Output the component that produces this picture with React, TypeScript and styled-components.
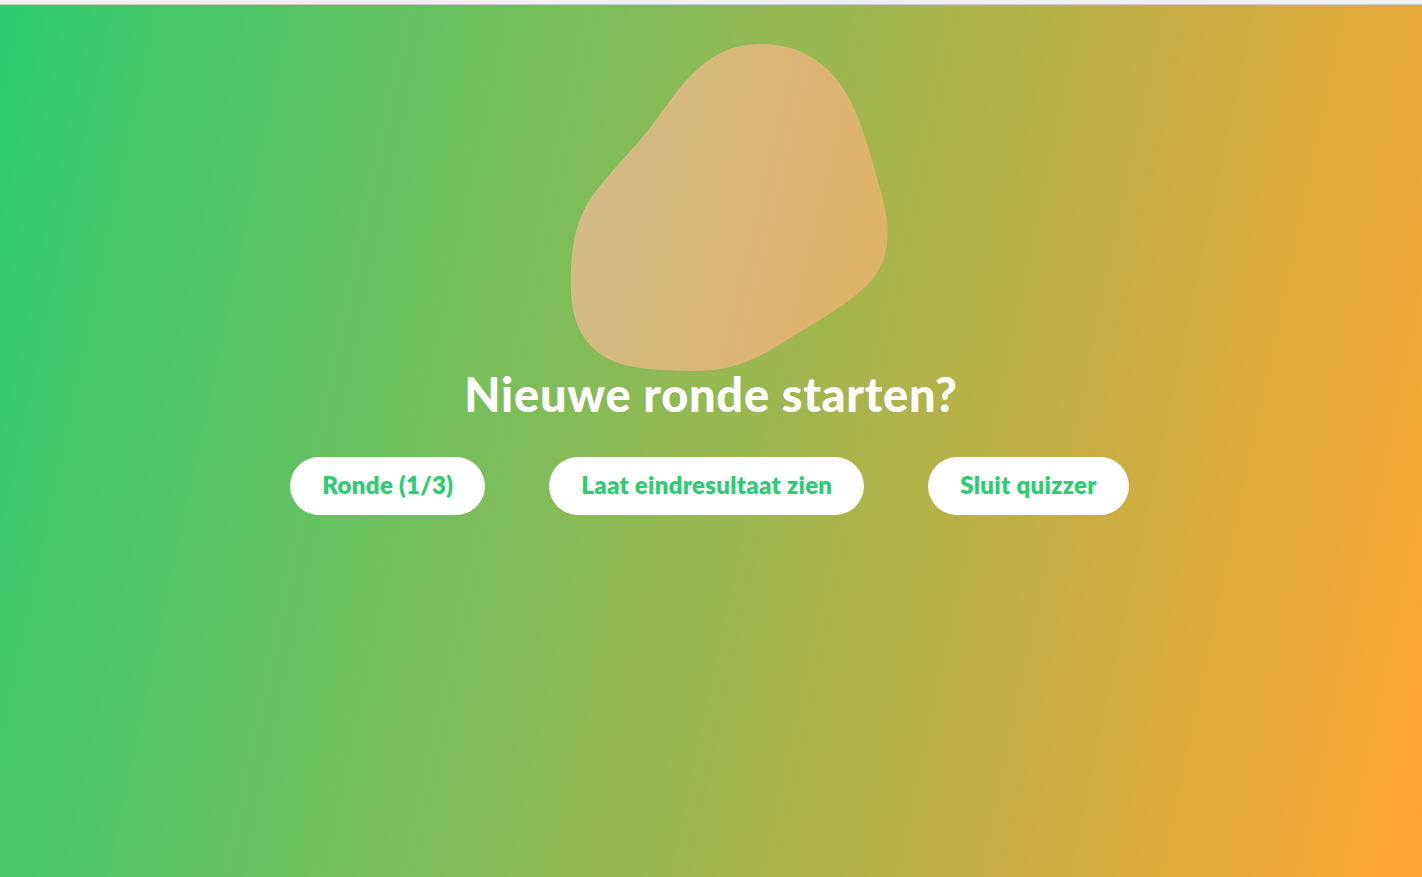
import React from "react";
import styled, { createGlobalStyle } from "styled-components";

const GlobalStyle = createGlobalStyle`
  html, body { margin: 0; padding: 0; }
  body { font-family: "Lato", "Open Sans", sans-serif; overflow: hidden; }
`;

const TopBar = styled.div`
  height: 4px;
  background: #f1f1f1;
  border-bottom: 1px solid #c9c9c9;
`;

const Stage = styled.main`
  min-height: 872px;
  box-sizing: border-box;
  padding-top: 39px;
  display: flex;
  flex-direction: column;
  align-items: center;
  background: linear-gradient(102deg, #2ecc71 0%, #ffa432 100%);
`;

const Blob = styled.svg`
  display: block;
  overflow: visible;
  margin-bottom: -6px;
`;

const Title = styled.h1`
  margin: 0;
  font-family: "Lato", "Open Sans", sans-serif;
  font-weight: 900;
  font-size: 47px;
  line-height: 1.2;
  color: #ffffff;
  letter-spacing: 0.7px;
  position: relative;
`;

const ButtonRow = styled.div`
  display: flex;
  gap: 64px;
  margin-top: 35px;
  margin-right: 3px;
`;

const PillButton = styled.button`
  height: 58px;
  padding: 0 32px;
  border: none;
  border-radius: 29px;
  background: #ffffff;
  color: #2ecc71;
  font-family: "Lato", "Open Sans", sans-serif;
  font-weight: 800;
  font-size: 24px;
  letter-spacing: 0.3px;
  line-height: 1;
  padding-bottom: 3px;
  cursor: pointer;
`;

export default function App() {
  return (
    <>
      <GlobalStyle />
      <TopBar />
      <Stage>
        <Blob width={380} height={328} viewBox="521 44 380 328">
          <defs>
            <linearGradient id="blobFill" x1="0" y1="0" x2="1" y2="0.25">
              <stop offset="0" stopColor="#cfbd8c" />
              <stop offset="1" stopColor="#dfb36a" />
            </linearGradient>
          </defs>
          <path
            fill="url(#blobFill)"
            d="M760,44 C800,44 830,62 850,100 C863,125 875,170 883,200 C892,235 888,262 870,282 C850,303 820,320 795,335 C760,357 735,372 690,371 C645,370 610,368 590,345 C572,325 570,300 571,270 C572,240 578,215 595,192 C612,170 635,147 650,128 C680,88 705,44 760,44 Z"
          />
        </Blob>
        <Title>Nieuwe ronde starten?</Title>
        <ButtonRow>
          <PillButton>Ronde (1/3)</PillButton>
          <PillButton>Laat eindresultaat zien</PillButton>
          <PillButton>Sluit quizzer</PillButton>
        </ButtonRow>
      </Stage>
    </>
  );
}
